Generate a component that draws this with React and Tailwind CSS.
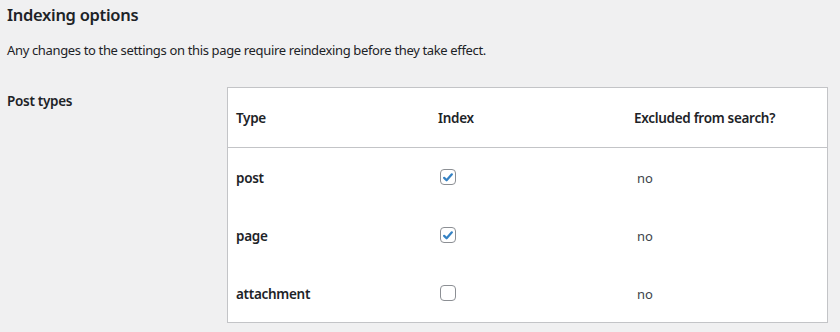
export default function App() {
  const rows = [
    { type: "post", checked: true },
    { type: "page", checked: true },
    { type: "attachment", checked: false },
  ];

  return (
    <div
      className="min-h-screen bg-[#f0f0f1] pl-[7px] pr-3 text-[#1d2327]"
      style={{ fontFamily: '"Noto Sans", "Open Sans", sans-serif' }}
    >
      <h2 className="pt-[3px] text-[16.5px] font-semibold leading-[24px] tracking-[-0.3px]">Indexing options</h2>
      <p className="mt-[13px] text-[13px] leading-[20px] tracking-[-0.35px]">
        Any changes to the settings on this page require reindexing before they take effect.
      </p>

      <div className="mt-[27px] flex">
        <div className="w-[220px] pt-[4px] text-[13.5px] font-semibold leading-[20px] tracking-[-0.3px]">Post types</div>
        <div className="w-[601px] border border-[#c3c4c7] bg-white">
          {/* header row */}
          <div className="grid h-[60px] grid-cols-[200px_198px_1fr] items-center border-b border-[#c3c4c7] pt-[1px] text-[13.5px] font-semibold leading-[20px] tracking-[-0.3px]">
            <div className="pl-[8px]">Type</div>
            <div className="pl-[10px]">Index</div>
            <div className="pl-[8px]">Excluded from search?</div>
          </div>
          {rows.map((row) => (
            <div
              key={row.type}
              className="grid h-[58px] grid-cols-[200px_198px_1fr] items-center text-[13.5px] leading-[20px]"
            >
              <div className="pl-[8px] pt-[1px] font-semibold tracking-[-0.3px]">{row.type}</div>
              <div className="pl-[12px]">
                <span className="flex h-4 w-4 items-center justify-center rounded-[4px] border border-[#8c8f94] bg-white">
                  {row.checked && (
                    <svg viewBox="0 0 20 20" className="h-[15px] w-[15px]">
                      <path d="M4.5 10.5l3.5 3.5 7.5-8.5" fill="none" stroke="#3582c4" strokeWidth="3.2" strokeLinecap="round" strokeLinejoin="round" />
                    </svg>
                  )}
                </span>
              </div>
              <div className="pl-[11px] pt-[1px] text-[13px] text-[#3c434a]">no</div>
            </div>
          ))}
        </div>
      </div>
    </div>
  );
}
